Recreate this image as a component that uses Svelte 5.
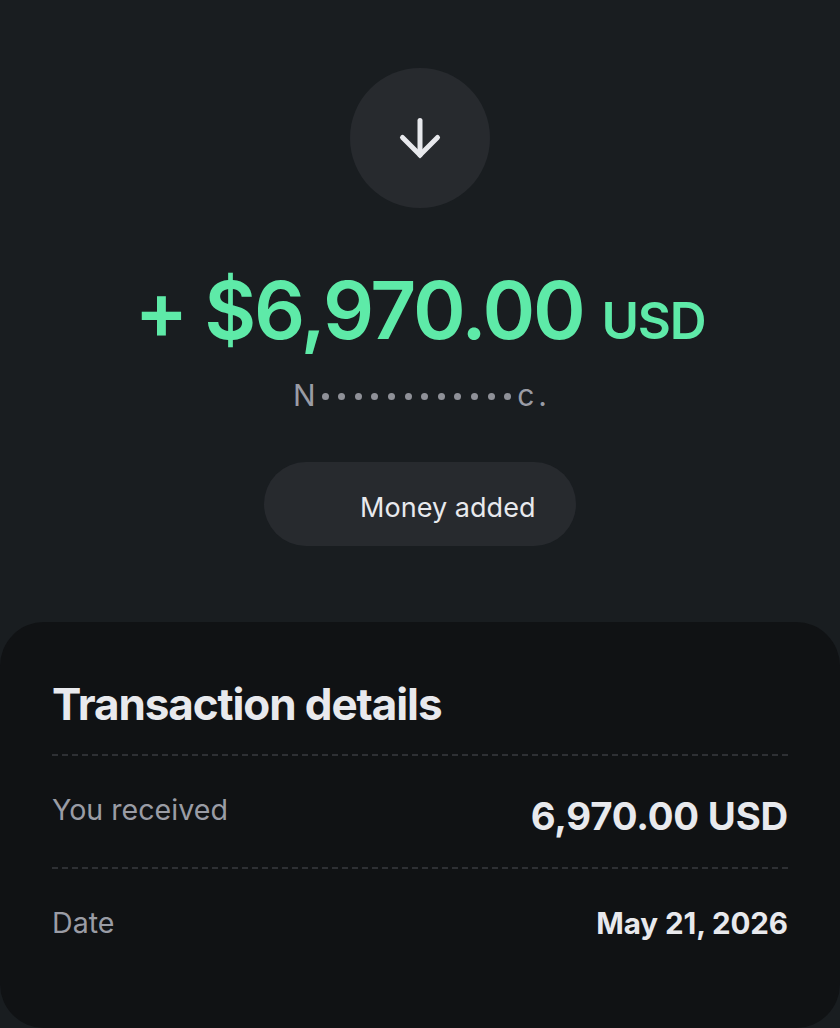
<script lang="ts">
  const dots = Array.from({ length: 12 });
  const rows = [
    { label: "You received", value: "6,970.00 USD", big: true },
    { label: "Date", value: "May 21, 2026", big: false },
  ];
</script>

<main class="page">
  <section class="hero">
    <div class="icon">
      <svg width="48" height="48" viewBox="0 0 48 48" fill="none" stroke="#e8e9ed" stroke-width="5" stroke-linecap="round" stroke-linejoin="miter">
        <path d="M24 6.500V41" />
        <path d="M6.500 23.500L24 41L41.500 23.500" />
      </svg>
    </div>
    <h1 class="amount">+ $6,970.00 <span>USD</span></h1>
    <div class="name">
      <span>N</span>
      <div class="dots">{#each dots as _}<i></i>{/each}</div>
      <span class="tail">c.</span>
    </div>
    <div class="pill">Money added</div>
  </section>

  <section class="card">
    <h2>Transaction details</h2>
    {#each rows as row}
      <div class="row">
        <span class="label">{row.label}</span>
        <span class="value" class:big={row.big}>{row.value}</span>
      </div>
    {/each}
  </section>
</main>

<style>
  :global(body) { margin:0; background:#191d20; font-family:Inter, "Liberation Sans", sans-serif; }
  .page { height:1028px; display:flex; flex-direction:column; overflow:hidden; }
  .hero { display:flex; flex-direction:column; align-items:center; padding-top:68px; height:554px; }
  .icon { width:140px; height:140px; border-radius:50%; background:#272a2e; display:flex; align-items:center; justify-content:center; }
  .amount { margin:58px 0 0; font-size:80px; line-height:88px; font-weight:600; letter-spacing:-2.2px; color:#5eeaa8; white-space:nowrap; }
  .amount span { font-size:51px; letter-spacing:-1.2px; font-weight:600; }
  .name { margin-top:14px; height:32px; display:flex; align-items:center; color:#9a9ca5; font-size:30px; }
  .dots { display:flex; gap:9.6px; margin:2px 6px 0 6px; }
  .dots i { width:7px; height:7px; border-radius:50%; background:#8f9198; }
  .name .tail { letter-spacing:4px; margin-right:-4px; }
  .pill { margin-top:51px; width:312px; height:84px; box-sizing:border-box; padding:4px 0 0 96px; border-radius:42px; background:#272a2e; color:#e8e9ed; font-size:27px; letter-spacing:.05px; line-height:84px; white-space:nowrap; }
  .card { flex:1; background:#101214; border-radius:44px; padding:54px 52px 0; }
  h2 { margin:0; font-size:44px; line-height:56px; font-weight:700; letter-spacing:-1.1px; color:#e8e9ed; padding-bottom:22px; }
  .row { display:flex; justify-content:space-between; align-items:flex-start; border-top:2px dashed #2e3034; box-sizing:border-box; height:113px; padding-top:34px; }
  .label { font-size:28.6px; line-height:40px; color:#9a9ca5; }
  .value { font-size:29.6px; line-height:40px; font-weight:650; letter-spacing:-.1px; color:#e8e9ed; }
  .value.big { font-size:38.3px; line-height:52px; letter-spacing:-.2px; }
</style>
